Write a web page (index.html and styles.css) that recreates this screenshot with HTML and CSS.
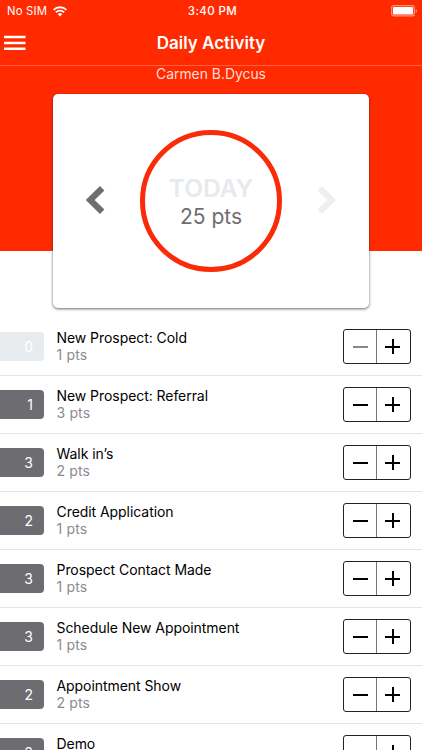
FILE: index.html
```html
<!DOCTYPE html>
<html lang="en">
<head>
<meta charset="utf-8">
<title>Daily Activity</title>
<link rel="stylesheet" href="styles.css">
</head>
<body>
<header class="hero">
  <div class="status">
    <div class="carrier"><span>No SIM</span>
      <svg class="wifi" viewBox="0 0 14 11"><path d="M.6 3.9a9.1 9.1 0 0 1 12.8 0" /><path d="M2.9 6.3a5.8 5.8 0 0 1 8.2 0" /><path class="dot" d="M4.7 8.1a3.3 3.3 0 0 1 4.6 0L7 10.5z" /></svg>
    </div>
    <div class="clock">3:40 PM</div>
    <svg class="battery" viewBox="0 0 27 12"><rect class="shell" x=".7" y=".6" width="22.6" height="10.3" rx="2"/><rect class="charge" x="2" y="2" width="20" height="7.5" rx=".7"/><path class="cap" d="M24.7 4v4c1.7-.7 1.7-3.3 0-4z"/></svg>
  </div>
  <div class="navbar">
    <svg class="menu" viewBox="0 0 22 16"><path d="M0 2h21.5M0 8h21.5M0 13.7h21.5"/></svg>
    <h1>Daily Activity</h1>
  </div>
  <div class="person">Carmen B.Dycus</div>
  <section class="card">
    <svg class="arrow" viewBox="0 0 20 30"><path d="M16.2 3.2 4.2 15l12 11.8"/></svg>
    <div class="ring"><strong>TODAY</strong><span>25 pts</span></div>
    <svg class="arrow next" viewBox="0 0 20 30"><path d="M3.8 3.2 15.8 15l-12 11.8"/></svg>
  </section>
</header>
<main class="list">
  <div class="row"><div class="badge zero">0</div><div class="info"><b>New Prospect: Cold</b><span>1 pts</span></div><div class="stepper off"><i class="minus"></i><i class="plus"></i></div></div>
  <div class="row"><div class="badge">1</div><div class="info"><b>New Prospect: Referral</b><span>3 pts</span></div><div class="stepper"><i class="minus"></i><i class="plus"></i></div></div>
  <div class="row"><div class="badge">3</div><div class="info"><b>Walk in’s</b><span>2 pts</span></div><div class="stepper"><i class="minus"></i><i class="plus"></i></div></div>
  <div class="row"><div class="badge">2</div><div class="info"><b>Credit Application</b><span>1 pts</span></div><div class="stepper"><i class="minus"></i><i class="plus"></i></div></div>
  <div class="row"><div class="badge">3</div><div class="info"><b>Prospect Contact Made</b><span>1 pts</span></div><div class="stepper"><i class="minus"></i><i class="plus"></i></div></div>
  <div class="row"><div class="badge">3</div><div class="info"><b>Schedule New Appointment</b><span>1 pts</span></div><div class="stepper"><i class="minus"></i><i class="plus"></i></div></div>
  <div class="row"><div class="badge">2</div><div class="info"><b>Appointment Show</b><span>2 pts</span></div><div class="stepper"><i class="minus"></i><i class="plus"></i></div></div>
  <div class="row"><div class="badge">3</div><div class="info"><b>Demo</b></div><div class="stepper"><i class="minus"></i><i class="plus"></i></div></div>
</main>
</body>
</html>
```
FILE: styles.css
```css
* { box-sizing: border-box; }
html { height: 750px; overflow: hidden; }
body { margin: 0; height: 750px; overflow: hidden; background: #fff; font-family: Inter, "Liberation Sans", sans-serif; color: #111; }
.hero { height: 318px; background: linear-gradient(#ff2a00 250.5px, #fff 250.5px); color: #fff; }
.status { height: 22px; display: grid; grid-template-columns: 1fr auto 1fr; align-items: center; padding: 0 4px 0 7px; font-size: 11.3px; line-height: 22px; }
.carrier { display: flex; align-items: center; gap: 6px; letter-spacing: .2px; }
.wifi { width: 14px; height: 11px; fill: none; stroke: #fff; stroke-width: 1.8; }
.wifi .dot { fill: #fff; stroke: none; }
.clock { font-weight: 500; font-size: 11.5px; letter-spacing: .4px; }
.battery { width: 27px; height: 12px; justify-self: end; }
.shell { fill: none; stroke: #ff9580; stroke-width: 1.2; }
.charge { fill: #fff; }
.cap { fill: #ff9580; }
.navbar { height: 44px; display: grid; grid-template-columns: 60px 1fr 60px; align-items: center; border-bottom: 1px solid #ff6040; }
.menu { width: 22px; height: 16px; margin: -2px 0 0 4px; stroke: #fff; stroke-width: 2.5; }
h1 { margin: 0; text-align: center; font-size: 17px; font-weight: 600; line-height: 22px; padding-bottom: 2px; }
.person { height: 28px; text-align: center; font-size: 13.9px; line-height: 17px; color: #ffded8; }
.card { width: 316px; height: 214px; margin: 0 auto; background: #fff; border-radius: 5px; box-shadow: 0 1px 3px rgba(40,40,50,.7); display: flex; align-items: center; justify-content: space-between; padding: 0 33px; }
.arrow { width: 20px; height: 30px; margin-top: -2px; fill: none; stroke: #6d6d72; stroke-width: 6.2; }
.next { stroke: #efefef; }
.ring { width: 142px; height: 142px; padding-top: 3px; border: 5px solid #f92b08; border-radius: 50%; display: flex; flex-direction: column; align-items: center; justify-content: center; color: #6d6d72; }
.ring strong { color: #e7eaed; font-size: 24.5px; line-height: 28px; font-weight: 600; }
.ring span { font-size: 21px; line-height: 30px; }
.row { height: 58px; border-bottom: 1px solid #e5e5e6; display: flex; align-items: center; padding-right: 11px; }
.badge { width: 44px; height: 29px; background: #6d6c71; color: #fff; border-radius: 0 4px 4px 0; text-align: right; padding-right: 11px; font-size: 14px; line-height: 29px; }
.badge.zero { background: #e7ebee; }
.info { flex: 1; height: 36px; margin-left: 12.5px; }
.info b, .info span { display: block; font-weight: 400; font-size: 14px; line-height: 17px; letter-spacing: -.06px; white-space: nowrap; }
.info b { color: #000; }
.info span { color: #8b8b8f; letter-spacing: .15px; }
.stepper { width: 68px; height: 35px; border: 1px solid #222; border-radius: 3px; display: grid; grid-template-columns: 33px 33px; }
.stepper i { display: block; }
.stepper .minus { background: linear-gradient(#000,#000) center / 15px 2px no-repeat; border-right: 1px solid #777; }
.stepper .plus { background: linear-gradient(#000,#000) 8px center / 15px 2px no-repeat, linear-gradient(#000,#000) 15px center / 2px 15px no-repeat; }
.off .minus { background-image: linear-gradient(#888,#888); }
```
